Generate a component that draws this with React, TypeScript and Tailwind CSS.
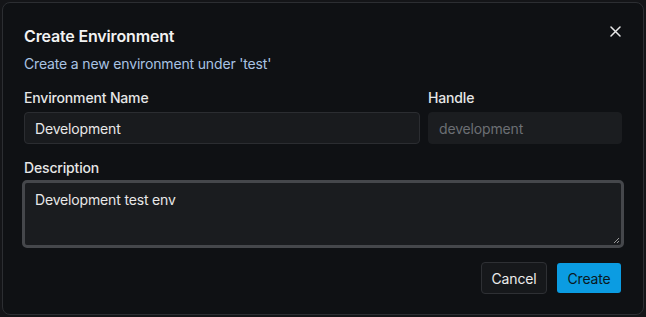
import React from "react";

export default function App() {
  return (
    <div className="w-[646px] h-[317px] bg-[#141518] p-[2px] tracking-[-0.01em]" style={{ fontFamily: "Inter, 'Noto Sans', sans-serif" }}>
      <div className="relative w-[642px] h-[313px] rounded-[8px] border border-[#2c2e32] bg-[#0f1114] pl-[21px] pr-[22px] pt-[21px]">
        <button className="absolute right-[22px] top-[23px] text-[#e8e8e8]">
          <svg width="11" height="11" viewBox="0 0 11 11" fill="none" stroke="currentColor" strokeWidth="1.5" strokeLinecap="round">
            <path d="M1 1L10 10M10 1L1 10" />
          </svg>
        </button>
        <h2 className="text-[16px] leading-[24px] font-semibold text-[#f2f2f2]">Create Environment</h2>
        <p className="mt-[6px] text-[14px] leading-[20px] text-[#a9c3e3]">Create a new environment under 'test'</p>
        <div className="mt-[14px] grid grid-cols-[396px_194px] gap-x-[8px]">
          <div className="flex flex-col gap-[4px]">
            <label className="text-[14px] leading-[20px] font-medium text-[#e6e6e6]">Environment Name</label>
            <div className="h-[32px] rounded-[4px] border border-[#2b2d31] bg-[#191b1e] px-[10px] flex items-center text-[14px] text-[#e8e8e8]">Development</div>
          </div>
          <div className="flex flex-col gap-[4px]">
            <label className="text-[14px] leading-[20px] font-medium text-[#e6e6e6]">Handle</label>
            <div className="h-[32px] rounded-[4px] border border-[#1b1d20] bg-[#1b1d20] px-[10px] flex items-center text-[14px] text-[#6c6f74]">development</div>
          </div>
        </div>
        <div className="mt-[14px] flex flex-col gap-[2px]">
          <label className="text-[14px] leading-[20px] font-medium text-[#e6e6e6]">Description</label>
          <div className="relative -ml-[2px] -mr-[3px] h-[68px] rounded-[5px] border-[3px] border-[#45474b] bg-[#1a1c1f] px-[10px] pt-[7px] text-[14px] leading-[20px] text-[#e8e8e8]">
            Development test env
            <svg className="absolute right-[1px] bottom-[1px]" width="7" height="7" viewBox="0 0 7 7" stroke="#9a9a9a" strokeWidth="1">
              <path d="M1 6L6 1M4 6L6 4" />
            </svg>
          </div>
        </div>
        <div className="mt-[14px] flex justify-end gap-[10px]">
          <button className="h-[32px] w-[66px] rounded-[4px] border border-[#2e3034] bg-[#16181b] text-[14px] text-[#ececec]">Cancel</button>
          <button className="mt-[1px] h-[30px] w-[64px] rounded-[3px] bg-[#0b9ce2] text-[14px] text-[#0a1822]">Create</button>
        </div>
      </div>
    </div>
  );
}
